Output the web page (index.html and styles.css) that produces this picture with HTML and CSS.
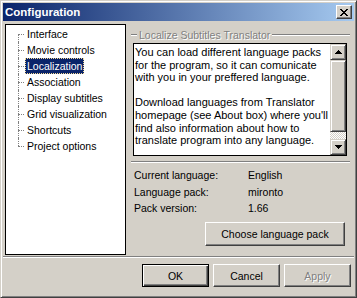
FILE: index.html
```html
<!DOCTYPE html>
<html>
<head>
<meta charset="utf-8">
<link rel="stylesheet" href="styles.css">
</head>
<body>
<div class="window">
  <div class="titlebar">
    <span class="title">Configuration</span>
    <div class="close">
      <svg width="8" height="7" viewBox="0 0 8 7" shape-rendering="crispEdges"><path fill="#000" d="M0 0h2v1H0zM6 0h2v1H6zM1 1h2v1H1zM5 1h2v1H5zM2 2h4v1H2zM3 3h2v1H3zM2 4h4v1H2zM1 5h2v1H1zM5 5h2v1H5zM0 6h2v1H0zM6 6h2v1H6z"/></svg>
    </div>
  </div>
  <div class="content">
    <ul class="tree">
      <li class="item first"><span class="label">Interface</span></li>
      <li class="item"><span class="label">Movie controls</span></li>
      <li class="item"><span class="label selected">Localization</span></li>
      <li class="item"><span class="label">Association</span></li>
      <li class="item"><span class="label">Display subtitles</span></li>
      <li class="item"><span class="label">Grid visualization</span></li>
      <li class="item"><span class="label">Shortcuts</span></li>
      <li class="item last"><span class="label">Project options</span></li>
    </ul>
    <div class="panel">
      <div class="group-head">
        <span class="etch short"></span>
        <span class="group-title">Localize Subtitles Translator</span>
        <span class="etch grow"></span>
      </div>
      <div class="memo">
        <div class="memo-text">
          <p>You can load different language packs for the program, so it can comunicate with you in your preffered language.</p>
          <p>Download languages from Translator homepage (see About box) where you'll find also information about how to translate program into any language.</p>
        </div>
        <div class="scrollbar">
          <div class="sb-btn">
            <svg width="7" height="4" viewBox="0 0 7 4" shape-rendering="crispEdges"><path fill="#000" d="M3 0h1v1H3zM2 1h3v1H2zM1 2h5v1H1zM0 3h7v1H0z"/></svg>
          </div>
          <div class="sb-thumb"></div>
          <div class="sb-track"></div>
          <div class="sb-btn">
            <svg width="7" height="4" viewBox="0 0 7 4" shape-rendering="crispEdges"><path fill="#000" d="M0 0h7v1H0zM1 1h5v1H1zM2 2h3v1H2zM3 3h1v1H3z"/></svg>
          </div>
        </div>
      </div>
      <div class="etch full"></div>
      <div class="info">
        <div class="row"><span class="key">Current language:</span><span class="val">English</span></div>
        <div class="row"><span class="key">Language pack:</span><span class="val">mironto</span></div>
        <div class="row"><span class="key">Pack version:</span><span class="val">1.66</span></div>
      </div>
      <div class="choose-row">
        <div class="btn choose">Choose language pack</div>
      </div>
    </div>
  </div>
  <div class="etch separator"></div>
  <div class="footer">
    <div class="btn default">OK</div>
    <div class="btn">Cancel</div>
    <div class="btn disabled">Apply</div>
  </div>
</div>
</body>
</html>
```

FILE: styles.css
```css
* { box-sizing: border-box; }
html, body { margin: 0; padding: 0; background: #d4d0c8; }
body {
  font-family: "Liberation Sans", Arial, sans-serif;
  font-size: 10.5px;
  color: #000;
}
.window {
  width: 357px;
  height: 298px;
  background: #d4d0c8;
  border: 1px solid;
  border-color: #d4d0c8 #404040 #404040 #d4d0c8;
  box-shadow: inset 1px 1px #fff, inset -1px -1px #808080;
  padding: 2px;
  display: flex;
  flex-direction: column;
}
.titlebar {
  height: 18px;
  flex: none;
  display: flex;
  align-items: center;
  justify-content: space-between;
  padding: 0 2px 0 2px;
  background: linear-gradient(to right, #0a246a, #a6caf0);
}
.title {
  color: #fff;
  font-weight: bold;
  font-size: 11.5px;
  letter-spacing: 0;
}
.close {
  width: 16px;
  height: 14px;
  background: #d4d0c8;
  border: 1px solid;
  border-color: #fff #404040 #404040 #fff;
  box-shadow: inset -1px -1px #808080;
  display: flex;
  align-items: center;
  justify-content: center;
  padding-right: 1px;
}
.close svg { display: block; }
.content {
  height: 235px;
  flex: none;
  display: flex;
}
.tree {
  list-style: none;
  margin: 3px 0 0 2px;
  padding: 1px 0 0 19px;
  width: 121px;
  height: 231px;
  background: #fff;
  border: 1px solid #000;
}
.item {
  position: relative;
  height: 16px;
  line-height: 16px;
  white-space: nowrap;
}
.item::before {
  content: "";
  position: absolute;
  left: -7px;
  top: 8px;
  width: 6px;
  border-top: 1px dotted #808080;
}
.item::after {
  content: "";
  position: absolute;
  left: -7px;
  top: 0;
  height: 16px;
  border-left: 1px dotted #808080;
}
.item.first::after { top: 8px; height: 8px; }
.item.last::after { height: 8px; }
.label {
  display: inline-block;
  padding: 0 2px;
  height: 16px;
  line-height: 16px;
}
.label.selected {
  background: #0a246a;
  color: #fff;
  outline: 1px dotted #f5db95;
  outline-offset: -1px;
}
.panel {
  margin: 7px 0 0 5px;
  width: 219px;
  display: flex;
  flex-direction: column;
}
.group-head {
  height: 13px;
  display: flex;
  align-items: center;
}
.etch {
  height: 2px;
  border-top: 1px solid #808080;
  border-bottom: 1px solid #fff;
}
.etch.short { width: 6px; flex: none; }
.etch.grow { flex: 1; }
.group-title {
  margin: 0 2px;
  color: #808080;
  text-shadow: 1px 1px 0 #fff;
  white-space: nowrap;
}
.memo {
  margin: 2px 0 0 2px;
  width: 214px;
  height: 113px;
  border: 1px solid #000;
  background: #fff;
  display: flex;
}
.memo-text {
  flex: 1;
  padding: 2px 0 0 1px;
  font-size: 11px;
  line-height: 12.6px;
  overflow: hidden;
}
.memo-text p { margin: 0 0 12.6px 0; }
.scrollbar {
  width: 16px;
  flex: none;
  display: flex;
  flex-direction: column;
}
.sb-btn, .sb-thumb {
  background: #d4d0c8;
  border: 1px solid;
  border-color: #d4d0c8 #404040 #404040 #d4d0c8;
  box-shadow: inset 1px 1px #fff, inset -1px -1px #808080;
}
.sb-btn {
  height: 16px;
  flex: none;
  display: flex;
  align-items: center;
  justify-content: center;
}
.sb-btn svg { display: block; }
.sb-thumb { height: 72px; flex: none; }
.sb-track {
  flex: 1;
  background: repeating-conic-gradient(#fff 0 25%, #d4d0c8 0 50%) 0 0 / 2px 2px;
}
.etch.full { margin-top: 5px; }
.info {
  margin: 4px 0 0 3px;
}
.row {
  display: flex;
  height: 16.5px;
  line-height: 16.5px;
}
.key { width: 114px; flex: none; }
.choose-row {
  display: flex;
  justify-content: flex-end;
  margin: 5px 5px 0 0;
}
.btn {
  background: #d4d0c8;
  border: 1px solid;
  border-color: #fff #404040 #404040 #fff;
  box-shadow: inset -1px -1px #808080;
  display: flex;
  align-items: center;
  justify-content: center;
  white-space: nowrap;
}
.btn.choose { width: 140px; height: 24px; }
.separator { flex: none; }
.footer {
  display: flex;
  justify-content: flex-end;
  gap: 4px;
  padding: 6px 3px 0 0;
}
.footer .btn { width: 67px; height: 23px; }
.btn.default {
  border-color: #000;
  box-shadow: inset 1px 1px #fff, inset -1px -1px #404040, inset -2px -2px #808080;
}
.btn.disabled {
  color: #808080;
  text-shadow: 1px 1px 0 #fff;
}
```
